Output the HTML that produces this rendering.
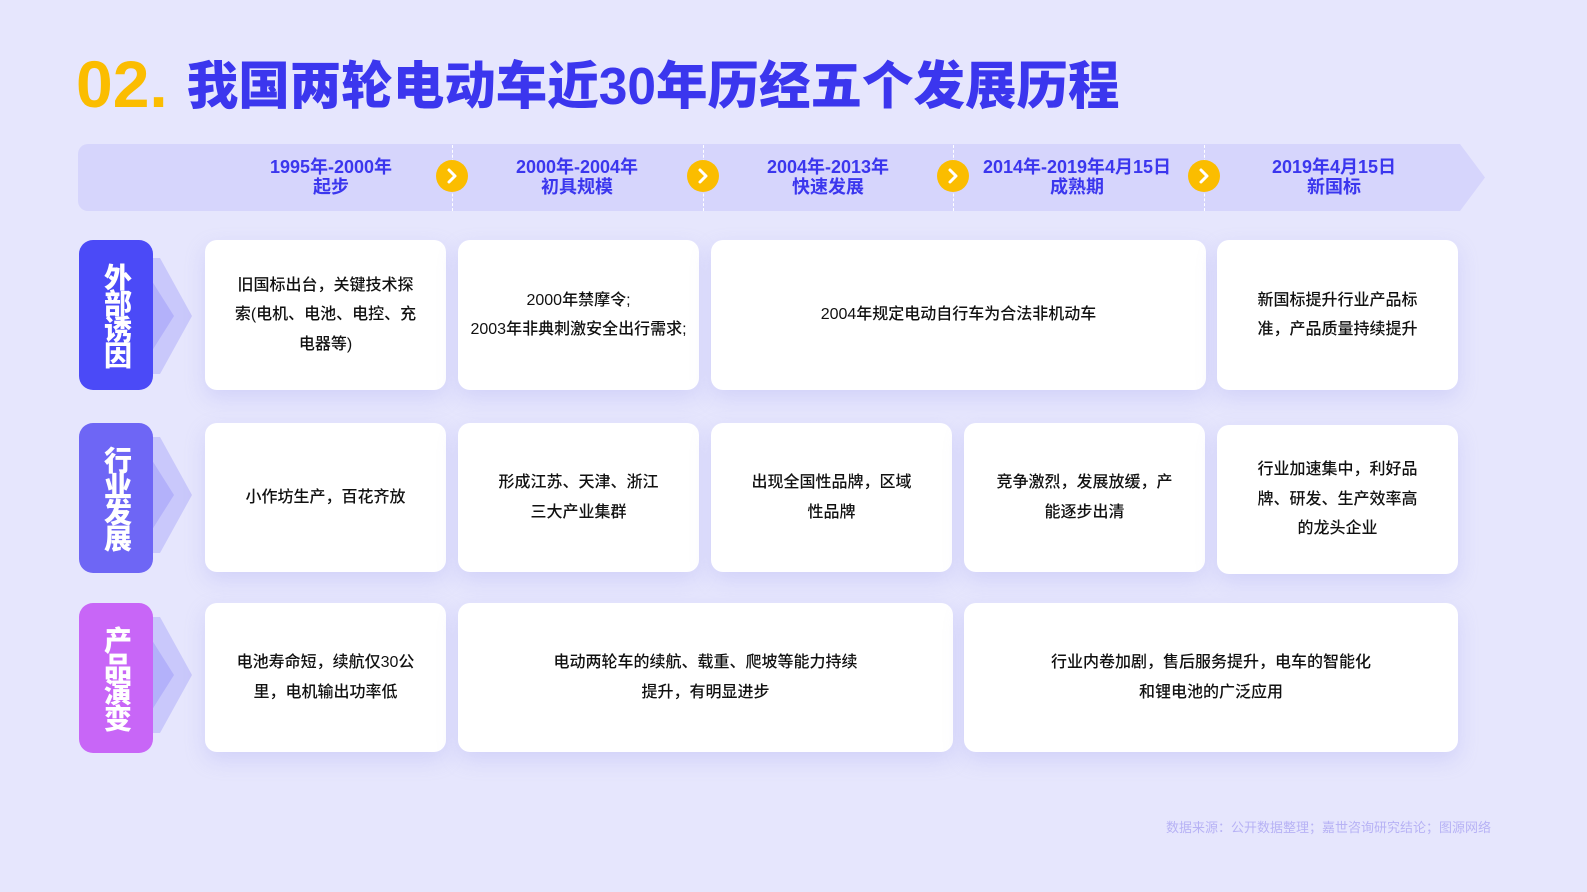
<!DOCTYPE html>
<html><head><meta charset="utf-8"><style>
*{margin:0;padding:0;box-sizing:border-box}
body{width:1587px;height:892px;background:#e6e6fd;font-family:"Liberation Sans","Noto Sans CJK SC",sans-serif;position:relative;overflow:hidden}
.title{position:absolute;left:76px;top:44px;font-size:51.5px;font-weight:900;color:#3b36ee;white-space:nowrap}
.title span{color:#fbbd00;font-size:66px;margin-right:19px;vertical-align:-3px}
.band{position:absolute;left:78px;top:144px;width:1407px;height:67px}
.hd{position:absolute;top:157px;font-size:18px;font-weight:700;color:#3b36ee;text-align:center;line-height:20px;white-space:nowrap;transform:translateX(-50%)}
.sep{position:absolute;top:145px;height:66px;border-left:1px dashed #fff}
.circ{position:absolute;top:160px;width:32px;height:32px;border-radius:50%;background:#fbbd00;margin-left:-16px}
.circ svg{position:absolute;left:0;top:0}
.lab{position:absolute;left:79px;width:74px;height:150px;border-radius:14px;color:#fff;font-size:28px;font-weight:900;display:flex;align-items:center;justify-content:center;writing-mode:vertical-rl;letter-spacing:-2px}
.chev{position:absolute;left:150px}
.card{position:absolute;background:#fff;border-radius:12px;box-shadow:0 8px 20px rgba(150,150,240,.25);display:flex;align-items:center;justify-content:center;text-align:center;font-size:16px;font-weight:500;line-height:29.5px;color:#111;padding:0 30px}
.src{position:absolute;right:96px;top:817px;font-size:13px;color:#b7b2f5}
</style></head><body>
<div class="title"><span>02.</span>我国两轮电动车近30年历经五个发展历程</div>
<svg class="band" width="1407" height="67"><path d="M10 0H1382L1407 33.5L1382 67H10A10 10 0 0 1 0 57V10A10 10 0 0 1 10 0Z" fill="#d6d5fc"/></svg>
<div class="sep" style="left:452px"></div><div class="sep" style="left:703px"></div><div class="sep" style="left:953px"></div><div class="sep" style="left:1204px"></div>
<div class="hd" style="left:331px">1995年-2000年<br>起步</div>
<div class="hd" style="left:577px">2000年-2004年<br>初具规模</div>
<div class="hd" style="left:828px">2004年-2013年<br>快速发展</div>
<div class="hd" style="left:1077px">2014年-2019年4月15日<br>成熟期</div>
<div class="hd" style="left:1334px">2019年4月15日<br>新国标</div>
<div class="circ" style="left:452px"><svg width="32" height="32"><path d="M13 10L19 16L13 22" stroke="#fff" stroke-width="3" fill="none" stroke-linecap="round" stroke-linejoin="round"/></svg></div>
<div class="circ" style="left:703px"><svg width="32" height="32"><path d="M13 10L19 16L13 22" stroke="#fff" stroke-width="3" fill="none" stroke-linecap="round" stroke-linejoin="round"/></svg></div>
<div class="circ" style="left:953px"><svg width="32" height="32"><path d="M13 10L19 16L13 22" stroke="#fff" stroke-width="3" fill="none" stroke-linecap="round" stroke-linejoin="round"/></svg></div>
<div class="circ" style="left:1204px"><svg width="32" height="32"><path d="M13 10L19 16L13 22" stroke="#fff" stroke-width="3" fill="none" stroke-linecap="round" stroke-linejoin="round"/></svg></div>

<svg class="chev" style="top:258px" width="45" height="116"><path d="M0 0H10L42 58L10 116H0Z" fill="#c9c8fb"/><path d="M0 20L24 58L0 96Z" fill="#b3b1fa"/></svg>
<svg class="chev" style="top:437px" width="45" height="116"><path d="M0 0H10L42 58L10 116H0Z" fill="#c9c8fb"/><path d="M0 20L24 58L0 96Z" fill="#b3b1fa"/></svg>
<svg class="chev" style="top:617px" width="45" height="116"><path d="M0 0H10L42 58L10 116H0Z" fill="#c9c8fb"/><path d="M0 20L24 58L0 96Z" fill="#b3b1fa"/></svg>
<div class="lab" style="top:240px;background:#4b4af7">外部诱因</div>
<div class="lab" style="top:423px;background:#6e66f5">行业发展</div>
<div class="lab" style="top:603px;background:#c866f7">产品演变</div>

<div class="card" style="left:205px;top:240px;width:241px;height:150px;padding:0 28px">旧国标出台，关键技术探索(电机、电池、电控、充电器等)</div>
<div class="card" style="left:458px;top:240px;width:241px;height:150px;padding:0 4px">2000年禁摩令;<br>2003年非典刺激安全出行需求;</div>
<div class="card" style="left:711px;top:240px;width:495px;height:150px">2004年规定电动自行车为合法非机动车</div>
<div class="card" style="left:1217px;top:240px;width:241px;height:150px;padding:0 38px">新国标提升行业产品标准，产品质量持续提升</div>

<div class="card" style="left:205px;top:423px;width:241px;height:149px">小作坊生产，百花齐放</div>
<div class="card" style="left:458px;top:423px;width:241px;height:149px;padding:0 38px">形成江苏、天津、浙江三大产业集群</div>
<div class="card" style="left:711px;top:423px;width:241px;height:149px;padding:0 38px">出现全国性品牌，区域性品牌</div>
<div class="card" style="left:964px;top:423px;width:241px;height:149px;padding:0 28px">竞争激烈，发展放缓，产能逐步出清</div>
<div class="card" style="left:1217px;top:425px;width:241px;height:149px;padding:0 38px">行业加速集中，利好品牌、研发、生产效率高的龙头企业</div>

<div class="card" style="left:205px;top:603px;width:241px;height:149px;padding:0 28px">电池寿命短，续航仅30公里，电机输出功率低</div>
<div class="card" style="left:458px;top:603px;width:495px;height:149px;padding:0 92px">电动两轮车的续航、载重、爬坡等能力持续提升，有明显进步</div>
<div class="card" style="left:964px;top:603px;width:494px;height:149px;padding:0 84px">行业内卷加剧，售后服务提升，电车的智能化和锂电池的广泛应用</div>

<div class="src">数据来源：公开数据整理；嘉世咨询研究结论；图源网络</div>
</body></html>
